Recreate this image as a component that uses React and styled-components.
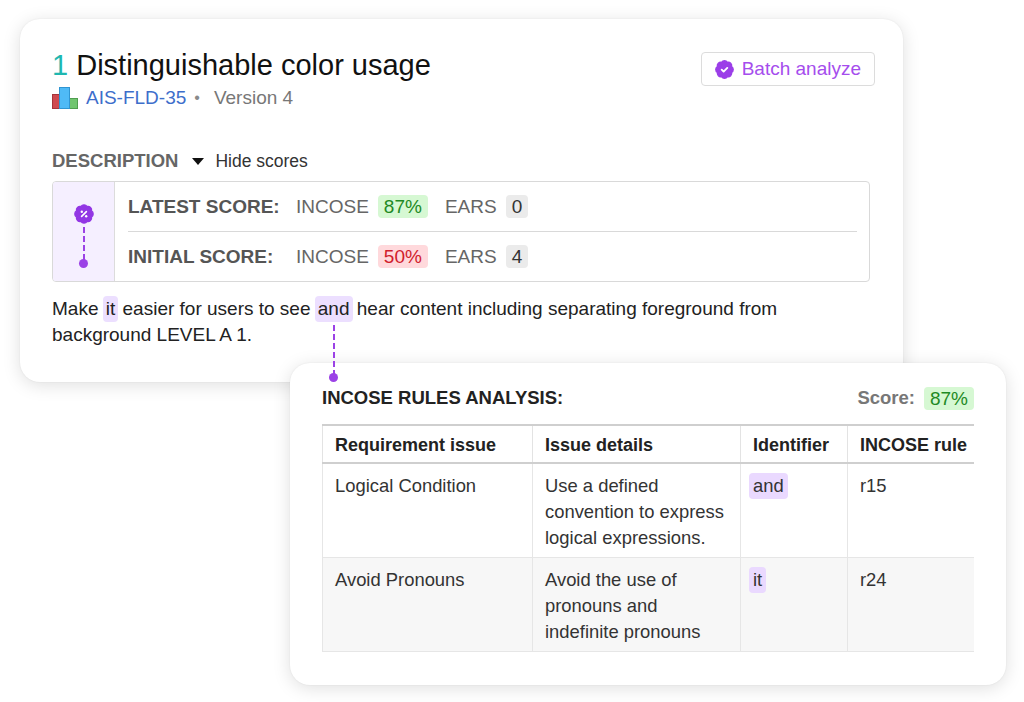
import React from 'react';
import styled, { createGlobalStyle } from 'styled-components';

const GlobalStyle = createGlobalStyle`
  html, body { margin: 0; padding: 0; background: #fff; }
  body { font-family: "Liberation Sans", Arial, sans-serif; color: #222; }
  * { box-sizing: border-box; }
`;

const FONT = `"Liberation Sans", Arial, sans-serif`;
const PURPLE = '#9b42e6';

const Canvas = styled.div`
  width: 1024px;
  height: 702px;
  overflow: hidden;
  padding: 19px 0 0 20px;
`;

const Card = styled.section`
  background: #fff;
  border-radius: 20px;
  box-shadow: 0 3px 18px rgba(0, 0, 0, 0.13), 0 0 2px rgba(0, 0, 0, 0.07);
`;

const MainCard = styled(Card)`
  position: relative;
  width: 883px;
  height: 363px;
  padding: 29px 33px 0 32px;
`;

const AnalysisCard = styled(Card)`
  position: relative;
  z-index: 1;
  width: 716px;
  height: 322px;
  margin: -19px 0 0 270px;
  padding: 23px 32px 0 32px;
`;

const HeaderRow = styled.div`
  display: flex;
  justify-content: space-between;
  align-items: flex-start;
  margin-right: -5px;
`;

const Title = styled.h1`
  margin: 0;
  font-size: 29px;
  line-height: 34px;
  font-weight: 400;
  color: #111;
`;

const Num = styled.span`
  color: #1fb7b0;
`;

const Meta = styled.div`
  display: flex;
  align-items: center;
  margin-top: 4px;
  height: 24px;
  font-size: 19px;
  line-height: 24px;
`;

const IdLink = styled.a`
  color: #3d6ecb;
  text-decoration: none;
  margin-left: 8px;
`;

const Bullet = styled.span`
  color: #8a8a8a;
  margin: 0 14px 0 8px;
  font-size: 16px;
`;

const Version = styled.span`
  color: #777;
`;

const BatchButton = styled.button`
  display: flex;
  align-items: center;
  gap: 7px;
  height: 34px;
  margin-top: 4px;
  padding: 0 13px 0 12px;
  border: 1px solid #dcdcdc;
  border-radius: 4px;
  background: #fff;
  color: #a54ded;
  font: 19px ${FONT};
  cursor: pointer;
`;

const SectionRow = styled.div`
  display: flex;
  align-items: center;
  height: 24px;
  margin-top: 39px;
`;

const SectionLabel = styled.span`
  font-size: 18.5px;
  font-weight: 700;
  color: #666;
`;

const Toggle = styled.span`
  display: flex;
  align-items: center;
  gap: 11px;
  margin-left: 14px;
  font-size: 17.5px;
  color: #333;
`;

const Caret = styled.span`
  width: 0;
  height: 0;
  border-left: 6px solid transparent;
  border-right: 6px solid transparent;
  border-top: 7px solid #111;
  margin-top: 1px;
`;

const ScoreBox = styled.div`
  display: flex;
  height: 101px;
  margin-top: 8px;
  border: 1px solid #d9d9d9;
  border-radius: 4px;
  overflow: hidden;
`;

const ScoreRail = styled.div`
  width: 62px;
  flex: none;
  display: flex;
  flex-direction: column;
  align-items: center;
  padding-top: 21px;
  background: #f5efff;
  border-right: 1px solid #dcdcdc;
`;

const RailLine = styled.span`
  width: 0;
  height: 33px;
  margin-top: 2px;
  border-left: 2px dashed ${PURPLE};
`;

const RailDot = styled.span`
  width: 9px;
  height: 9px;
  margin-top: -1px;
  border-radius: 50%;
  background: ${PURPLE};
`;

const ScoreRows = styled.div`
  flex: 1;
  display: flex;
  flex-direction: column;
  padding: 0 12px 0 13px;
`;

const ScoreRow = styled.div`
  flex: 1;
  display: flex;
  align-items: center;
  font-size: 19px;
  & + & {
    border-top: 1px solid #d9d9d9;
  }
`;

const ScoreLabel = styled.span`
  width: 168px;
  font-weight: 700;
  color: #555;
`;

const MetricName = styled.span`
  color: #666;
  margin-right: 9px;
`;

const tones = {
  good: { bg: '#d6f8d3', fg: '#1f8a25' },
  bad: { bg: '#ffd9dc', fg: '#d11d2c' },
  neutral: { bg: '#ebebeb', fg: '#333' },
};

const Pill = styled.span`
  display: inline-block;
  height: 23px;
  line-height: 23px;
  padding: 0 6px;
  margin-right: ${(p) => (p.$last ? 0 : 17)}px;
  border-radius: 4px;
  background: ${(p) => tones[p.$tone].bg};
  color: ${(p) => tones[p.$tone].fg};
`;

const Description = styled.p`
  margin: 14px 0 0;
  font-size: 19px;
  line-height: 26px;
  color: #222;
`;

const Mark = styled.span`
  position: relative;
  display: inline-block;
  line-height: 26px;
  padding: 0 3px;
  margin: 0 -1px;
  border-radius: 4px;
  background: #ecdfff;
`;

const Connector = styled.span`
  position: absolute;
  z-index: 2;
  left: calc(50% - 1px);
  top: calc(100% + 3px);
  height: 51px;
  border-left: 2px dashed ${PURPLE};
  &::after {
    content: '';
    position: absolute;
    left: -5.5px;
    bottom: -6px;
    width: 9px;
    height: 9px;
    border-radius: 50%;
    background: ${PURPLE};
  }
`;

const AnalysisHeader = styled.div`
  display: flex;
  align-items: center;
  justify-content: space-between;
  height: 24px;
`;

const AnalysisTitle = styled.h2`
  margin: 0;
  font-size: 18.5px;
  font-weight: 700;
  color: #222;
`;

const ScoreSummary = styled.div`
  display: flex;
  align-items: center;
  gap: 9px;
  font-size: 19px;
`;

const SummaryLabel = styled.span`
  font-size: 18.5px;
  font-weight: 700;
  color: #777;
`;

const TableWrap = styled.div`
  width: 652px;
  margin-top: 14px;
  overflow: hidden;
`;

const Table = styled.table`
  width: 652px;
  border-collapse: collapse;
  table-layout: fixed;
`;

const Th = styled.th`
  text-align: left;
  white-space: nowrap;
  overflow: hidden;
  font: 700 18px/26px ${FONT};
  color: #222;
  padding: 6px 12px 4px;
  border-top: 2px solid #cfcfcf;
  border-bottom: 2px solid #cfcfcf;
  border-left: 1px solid #e3e3e3;
  &:last-child {
    padding-right: 0;
    border-right: 1px solid #e3e3e3;
  }
`;

const Tr = styled.tr`
  background: ${(p) => (p.$striped ? '#f7f7f7' : '#fff')};
`;

const Td = styled.td`
  vertical-align: top;
  font: 18.4px/26px ${FONT};
  color: #333;
  padding: 9px 12px 6px;
  border-left: 1px solid #e6e6e6;
  border-bottom: 1px solid #e6e6e6;
`;

const IdTag = styled.span`
  display: inline-block;
  padding: 0 4px;
  margin-left: -4px;
  border-radius: 4px;
  background: #ead9ff;
  color: #333;
`;

const BadgePath =
  'M3.85 8.62a4 4 0 0 1 4.78-4.77 4 4 0 0 1 6.74 0 4 4 0 0 1 4.78 4.78 4 4 0 0 1 0 6.74 4 4 0 0 1-4.77 4.78 4 4 0 0 1-6.75 0 4 4 0 0 1-4.78-4.77 4 4 0 0 1 0-6.76Z';

const BadgeCheck = () => (
  <svg width="21" height="21" viewBox="0 0 24 24">
    <path d={BadgePath} fill="#9b3ee8" stroke="#9b3ee8" strokeWidth="1.5" strokeLinejoin="round" />
    <path d="m8.8 12.2 2.2 2.2 4.2-4.2" fill="none" stroke="#fff" strokeWidth="2.2" strokeLinecap="round" strokeLinejoin="round" />
  </svg>
);

const BadgePercent = () => (
  <svg width="22" height="22" viewBox="0 0 24 24">
    <path d={BadgePath} fill="#9236e4" stroke="#9236e4" strokeWidth="1.5" strokeLinejoin="round" />
    <path d="m14.6 9.4-5.2 5.2" fill="none" stroke="#fff" strokeWidth="1.8" strokeLinecap="round" />
    <circle cx="9.6" cy="9.6" r="1.3" fill="#fff" />
    <circle cx="14.4" cy="14.4" r="1.3" fill="#fff" />
  </svg>
);

const BarsLogo = () => (
  <svg width="26" height="22" viewBox="0 0 26 22">
    <rect x="0.5" y="7.5" width="9" height="14" fill="#cf4a50" stroke="#a5353b" />
    <rect x="16.5" y="11.5" width="9" height="10" fill="#70c56f" stroke="#4f9e4f" />
    <rect x="7.5" y="0.5" width="10" height="21" fill="#4fbaf6" stroke="#2f95d2" />
  </svg>
);

const scores = [
  { label: 'LATEST SCORE:', incose: '87%', tone: 'good', ears: '0' },
  { label: 'INITIAL SCORE:', incose: '50%', tone: 'bad', ears: '4' },
];

const rows = [
  {
    issue: 'Logical Condition',
    details: 'Use a defined convention to express logical expressions.',
    id: 'and',
    rule: 'r15',
  },
  {
    issue: 'Avoid Pronouns',
    details: 'Avoid the use of pronouns and indefinite pronouns',
    id: 'it',
    rule: 'r24',
  },
];

export default function App() {
  return (
    <>
      <GlobalStyle />
      <Canvas>
        <MainCard>
          <HeaderRow>
            <div>
              <Title>
                <Num>1</Num> Distinguishable color usage
              </Title>
              <Meta>
                <BarsLogo />
                <IdLink href="#">AIS-FLD-35</IdLink>
                <Bullet>•</Bullet>
                <Version>Version 4</Version>
              </Meta>
            </div>
            <BatchButton>
              <BadgeCheck />
              Batch analyze
            </BatchButton>
          </HeaderRow>

          <SectionRow>
            <SectionLabel>DESCRIPTION</SectionLabel>
            <Toggle>
              <Caret />
              Hide scores
            </Toggle>
          </SectionRow>

          <ScoreBox>
            <ScoreRail>
              <BadgePercent />
              <RailLine />
              <RailDot />
            </ScoreRail>
            <ScoreRows>
              {scores.map((s) => (
                <ScoreRow key={s.label}>
                  <ScoreLabel>{s.label}</ScoreLabel>
                  <MetricName>INCOSE</MetricName>
                  <Pill $tone={s.tone}>{s.incose}</Pill>
                  <MetricName>EARS</MetricName>
                  <Pill $tone="neutral" $last>
                    {s.ears}
                  </Pill>
                </ScoreRow>
              ))}
            </ScoreRows>
          </ScoreBox>

          <Description>
            Make <Mark>it</Mark> easier for users to see{' '}
            <Mark>
              and
              <Connector />
            </Mark>{' '}
            hear content including separating foreground from background LEVEL A 1.
          </Description>
        </MainCard>

        <AnalysisCard>
          <AnalysisHeader>
            <AnalysisTitle>INCOSE RULES ANALYSIS:</AnalysisTitle>
            <ScoreSummary>
              <SummaryLabel>Score:</SummaryLabel>
              <Pill $tone="good" $last>
                87%
              </Pill>
            </ScoreSummary>
          </AnalysisHeader>
          <TableWrap>
            <Table>
              <colgroup>
                <col style={{ width: 210 }} />
                <col style={{ width: 208 }} />
                <col style={{ width: 107 }} />
                <col style={{ width: 127 }} />
              </colgroup>
              <thead>
                <tr>
                  <Th>Requirement issue</Th>
                  <Th>Issue details</Th>
                  <Th>Identifier</Th>
                  <Th>INCOSE rule</Th>
                </tr>
              </thead>
              <tbody>
                {rows.map((r, i) => (
                  <Tr key={r.rule} $striped={i % 2 === 1}>
                    <Td>{r.issue}</Td>
                    <Td>{r.details}</Td>
                    <Td>
                      <IdTag>{r.id}</IdTag>
                    </Td>
                    <Td>{r.rule}</Td>
                  </Tr>
                ))}
              </tbody>
            </Table>
          </TableWrap>
        </AnalysisCard>
      </Canvas>
    </>
  );
}
